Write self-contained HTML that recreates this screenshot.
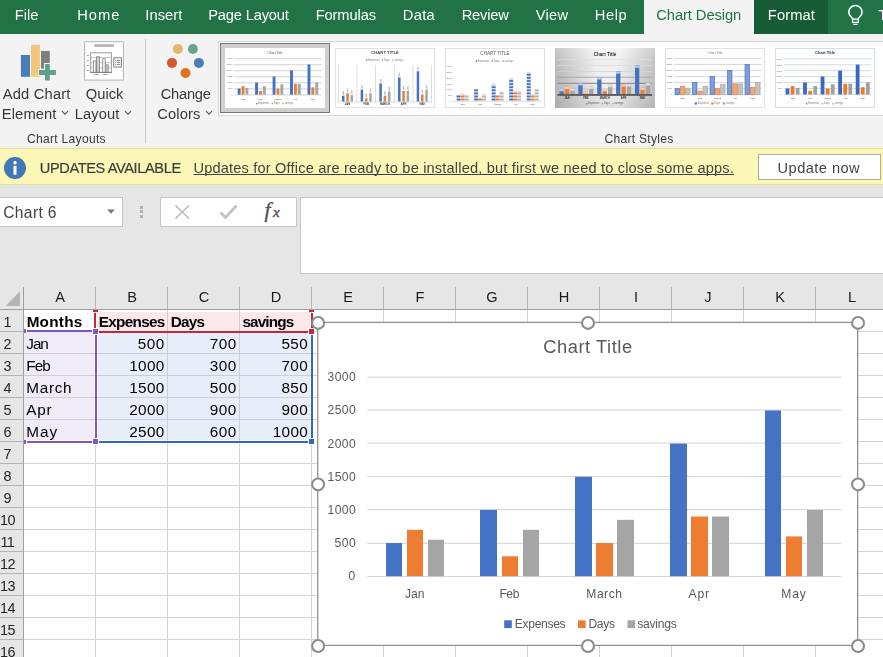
<!DOCTYPE html>
<html lang="en"><head><meta charset="utf-8"><title>Excel - Chart Design</title>
<style>
html,body{margin:0;padding:0;background:#fff;}
#app{position:relative;width:883px;height:657px;overflow:hidden;background:#fff;font-family:"Liberation Sans",sans-serif;}
#app div,#app svg{position:absolute;box-sizing:border-box;}
.t{position:absolute;white-space:pre;line-height:1;}
#topbar{left:0;top:0;width:883px;height:34px;background:#217346;}
#tab-cd{left:644px;top:0;width:110px;height:35px;background:#f3f3f3;}
#tab-fmt{left:754px;top:0;width:74px;height:34px;background:#185c37;}
#ribbon{left:0;top:34px;width:883px;height:115px;background:#f3f3f3;}
#sep1{left:145px;top:39px;width:1px;height:104px;background:#c6c6c6;}
#gallery{left:218px;top:41px;width:671px;height:75px;background:#fff;border:1px solid #d4d4d4;}
#selthumb{left:220px;top:43px;width:110px;height:70px;background:#d0cfcc;border:1px solid #767672;}
#th1{border:none;}
#th6{border-color:#d3dcee;}
.th{top:48px;width:100px;height:60px;background:#fff;border:1px solid #e1e1e1;}
#ybar{left:0;top:148px;width:883px;height:37px;background:#fcf7b6;border-top:1px solid #e5df94;border-bottom:1px solid #e5df94;}
#updbtn{left:758px;top:154px;width:123px;height:26px;background:#fff;border:1px solid #ababab;}
#fbar{left:0;top:185px;width:883px;height:102px;background:#e6e6e6;}
#namebox{left:-2px;top:197px;width:125px;height:30px;background:#fff;border:1px solid #c6c6c6;}
#fxbox{left:160px;top:197px;width:137px;height:30px;background:#fff;border:1px solid #c6c6c6;}
#finput{left:300px;top:197px;width:600px;height:77px;background:#fff;border:1px solid #c6c6c6;}
#colhdr{left:0;top:287px;width:883px;height:23px;background:#e6e6e6;border-bottom:1px solid #9f9f9f;}
#rowhdr{left:0;top:310px;width:24px;height:347px;background:#e6e6e6;border-right:1px solid #9f9f9f;}
.cs{top:287px;width:1px;height:22px;background:#b4b4b4;}
.vl{top:310px;width:1px;height:347px;background:#d4d4d4;}
.hl{left:24px;width:859px;height:1px;background:#d4d4d4;}
.rl{left:0;width:23px;height:1px;background:#b4b4b4;}
#chart{left:318px;top:322px;width:540px;height:324px;background:#fff;}
.gl{left:367.5px;width:474px;height:1px;background:#d9d9d9;}
.hd{width:13.400px;height:13.400px;border-radius:50%;background:#fff;border:2.400px solid #8f8f8f;}

</style></head>
<body>
<div id="app">
<div id="topbar"></div><div id="tab-fmt"></div>
<div id="ribbon"></div><div id="tab-cd"></div>
<div id="sep1"></div>
<div id="gallery"></div><div id="selthumb"></div>
<div class="th" id="th1" style="left:225px"></div>
<div class="th" id="th2" style="left:335px"></div>
<div class="th" id="th3" style="left:445px"></div>
<div class="th" id="th4" style="left:555px"></div>
<div class="th" id="th5" style="left:665px"></div>
<div class="th" id="th6" style="left:775px"></div>
<svg style="left:225px;top:48px;will-change:transform" width="100" height="60" viewBox="225 48 100 60" font-family="Liberation Sans, sans-serif"><rect x="234.3" y="94.25" width="87.30" height="1.2" fill="#dadada"/><rect x="234.3" y="88.22" width="87.30" height="1.2" fill="#dadada"/><rect x="234.3" y="82.19" width="87.30" height="1.2" fill="#dadada"/><rect x="234.3" y="76.16" width="87.30" height="1.2" fill="#dadada"/><rect x="234.3" y="70.13" width="87.30" height="1.2" fill="#dadada"/><rect x="234.3" y="64.10" width="87.30" height="1.2" fill="#dadada"/><rect x="234.3" y="58.07" width="87.30" height="1.2" fill="#dadada"/><g transform="translate(232.60 95.50) scale(0.25)"><text x="0" y="0" font-size="10.0" fill="#6e6e6e" font-weight="400" text-anchor="end" >0</text></g><g transform="translate(232.60 89.47) scale(0.25)"><text x="0" y="0" font-size="10.0" fill="#6e6e6e" font-weight="400" text-anchor="end" >500</text></g><g transform="translate(232.60 83.44) scale(0.25)"><text x="0" y="0" font-size="10.0" fill="#6e6e6e" font-weight="400" text-anchor="end" >1000</text></g><g transform="translate(232.60 77.41) scale(0.25)"><text x="0" y="0" font-size="10.0" fill="#6e6e6e" font-weight="400" text-anchor="end" >1500</text></g><g transform="translate(232.60 71.38) scale(0.25)"><text x="0" y="0" font-size="10.0" fill="#6e6e6e" font-weight="400" text-anchor="end" >2000</text></g><g transform="translate(232.60 65.35) scale(0.25)"><text x="0" y="0" font-size="10.0" fill="#6e6e6e" font-weight="400" text-anchor="end" >2500</text></g><g transform="translate(232.60 59.32) scale(0.25)"><text x="0" y="0" font-size="10.0" fill="#6e6e6e" font-weight="400" text-anchor="end" >3000</text></g><rect x="237.68" y="88.57" width="2.9" height="6.03" fill="#4472c4"/><rect x="241.58" y="86.16" width="2.9" height="8.44" fill="#ed7d31"/><rect x="245.48" y="87.97" width="2.9" height="6.63" fill="#a5a5a5"/><g transform="translate(243.03 99.60) scale(0.25)"><text x="0" y="0" font-size="10.0" fill="#3a3a3a" font-weight="400" text-anchor="middle" >Jan</text></g><rect x="255.14" y="82.54" width="2.9" height="12.06" fill="#4472c4"/><rect x="259.04" y="90.98" width="2.9" height="3.62" fill="#ed7d31"/><rect x="262.94" y="86.16" width="2.9" height="8.44" fill="#a5a5a5"/><g transform="translate(260.49 99.60) scale(0.25)"><text x="0" y="0" font-size="10.0" fill="#3a3a3a" font-weight="400" text-anchor="middle" >Feb</text></g><rect x="272.60" y="76.51" width="2.9" height="18.09" fill="#4472c4"/><rect x="276.50" y="88.57" width="2.9" height="6.03" fill="#ed7d31"/><rect x="280.40" y="84.35" width="2.9" height="10.25" fill="#a5a5a5"/><g transform="translate(277.95 99.60) scale(0.25)"><text x="0" y="0" font-size="10.0" fill="#3a3a3a" font-weight="400" text-anchor="middle" >March</text></g><rect x="290.06" y="70.48" width="2.9" height="24.12" fill="#4472c4"/><rect x="293.96" y="83.75" width="2.9" height="10.85" fill="#ed7d31"/><rect x="297.86" y="83.75" width="2.9" height="10.85" fill="#a5a5a5"/><g transform="translate(295.41 99.60) scale(0.25)"><text x="0" y="0" font-size="10.0" fill="#3a3a3a" font-weight="400" text-anchor="middle" >Apr</text></g><rect x="307.52" y="64.45" width="2.9" height="30.15" fill="#4472c4"/><rect x="311.42" y="87.36" width="2.9" height="7.24" fill="#ed7d31"/><rect x="315.32" y="82.54" width="2.9" height="12.06" fill="#a5a5a5"/><g transform="translate(312.87 99.60) scale(0.25)"><text x="0" y="0" font-size="10.0" fill="#3a3a3a" font-weight="400" text-anchor="middle" >May</text></g><g transform="translate(275.00 53.80) scale(0.25)"><text x="0" y="0" font-size="13.2" fill="#555" font-weight="400" text-anchor="middle" >Chart Title</text></g><rect x="256.10" y="103.00" width="1.3" height="1.3" fill="#4472c4"/><g transform="translate(258.20 104.10) scale(0.25)"><text x="0" y="0" font-size="10.4" fill="#7f7f7f" font-weight="400" text-anchor="start" >Expenses</text></g><rect x="271.70" y="103.00" width="1.3" height="1.3" fill="#ed7d31"/><g transform="translate(273.80 104.10) scale(0.25)"><text x="0" y="0" font-size="10.4" fill="#7f7f7f" font-weight="400" text-anchor="start" >Days</text></g><rect x="282.30" y="103.00" width="1.3" height="1.3" fill="#a5a5a5"/><g transform="translate(284.40 104.10) scale(0.25)"><text x="0" y="0" font-size="10.4" fill="#7f7f7f" font-weight="400" text-anchor="start" >savings</text></g></svg>
<svg style="left:335px;top:48px;will-change:transform" width="100" height="60" viewBox="335 48 100 60" font-family="Liberation Sans, sans-serif"><rect x="337.90" y="65" width="0.7" height="37.3" fill="#d0d0d0"/><rect x="356.58" y="65" width="0.7" height="37.3" fill="#d0d0d0"/><rect x="375.26" y="65" width="0.7" height="37.3" fill="#d0d0d0"/><rect x="393.94" y="65" width="0.7" height="37.3" fill="#d0d0d0"/><rect x="412.62" y="65" width="0.7" height="37.3" fill="#d0d0d0"/><rect x="431.30" y="65" width="0.7" height="37.3" fill="#d0d0d0"/><rect x="341.99" y="95.70" width="2.5" height="6.10" fill="#4472c4"/><rect x="342.49" y="91.10" width="1.5" height="3.6" fill="#c2c2c2"/><rect x="346.29" y="93.26" width="2.5" height="8.54" fill="#ed7d31"/><rect x="346.79" y="88.66" width="1.5" height="3.6" fill="#c2c2c2"/><rect x="350.59" y="95.09" width="2.5" height="6.71" fill="#a5a5a5"/><rect x="351.09" y="90.49" width="1.5" height="3.6" fill="#c2c2c2"/><g transform="translate(347.54 105.20) scale(0.25)"><text x="0" y="0" font-size="10.8" fill="#333" font-weight="700" text-anchor="middle" >JAN</text></g><rect x="360.67" y="89.60" width="2.5" height="12.20" fill="#4472c4"/><rect x="361.17" y="85.00" width="1.5" height="3.6" fill="#c2c2c2"/><rect x="364.97" y="98.14" width="2.5" height="3.66" fill="#ed7d31"/><rect x="365.47" y="93.54" width="1.5" height="3.6" fill="#c2c2c2"/><rect x="369.27" y="93.26" width="2.5" height="8.54" fill="#a5a5a5"/><rect x="369.77" y="88.66" width="1.5" height="3.6" fill="#c2c2c2"/><g transform="translate(366.22 105.20) scale(0.25)"><text x="0" y="0" font-size="10.8" fill="#333" font-weight="700" text-anchor="middle" >FEB</text></g><rect x="379.35" y="83.50" width="2.5" height="18.30" fill="#4472c4"/><rect x="379.85" y="78.90" width="1.5" height="3.6" fill="#c2c2c2"/><rect x="383.65" y="95.70" width="2.5" height="6.10" fill="#ed7d31"/><rect x="384.15" y="91.10" width="1.5" height="3.6" fill="#c2c2c2"/><rect x="387.95" y="91.43" width="2.5" height="10.37" fill="#a5a5a5"/><rect x="388.45" y="86.83" width="1.5" height="3.6" fill="#c2c2c2"/><g transform="translate(384.90 105.20) scale(0.25)"><text x="0" y="0" font-size="10.8" fill="#333" font-weight="700" text-anchor="middle" >MARCH</text></g><rect x="398.03" y="77.40" width="2.5" height="24.40" fill="#4472c4"/><rect x="398.53" y="72.80" width="1.5" height="3.6" fill="#c2c2c2"/><rect x="402.33" y="90.82" width="2.5" height="10.98" fill="#ed7d31"/><rect x="402.83" y="86.22" width="1.5" height="3.6" fill="#c2c2c2"/><rect x="406.63" y="90.82" width="2.5" height="10.98" fill="#a5a5a5"/><rect x="407.13" y="86.22" width="1.5" height="3.6" fill="#c2c2c2"/><g transform="translate(403.58 105.20) scale(0.25)"><text x="0" y="0" font-size="10.8" fill="#333" font-weight="700" text-anchor="middle" >APR</text></g><rect x="416.71" y="71.30" width="2.5" height="30.50" fill="#4472c4"/><rect x="417.21" y="66.70" width="1.5" height="3.6" fill="#c2c2c2"/><rect x="421.01" y="94.48" width="2.5" height="7.32" fill="#ed7d31"/><rect x="421.51" y="89.88" width="1.5" height="3.6" fill="#c2c2c2"/><rect x="425.31" y="89.60" width="2.5" height="12.20" fill="#a5a5a5"/><rect x="425.81" y="85.00" width="1.5" height="3.6" fill="#c2c2c2"/><g transform="translate(422.26 105.20) scale(0.25)"><text x="0" y="0" font-size="10.8" fill="#333" font-weight="700" text-anchor="middle" >MAY</text></g><rect x="338.2" y="101.50" width="93.40" height="0.8" fill="#d4d4d4"/><g transform="translate(385.00 53.70) scale(0.25)"><text x="0" y="0" font-size="16.8" fill="#4a4a4a" font-weight="700" text-anchor="middle" >CHART TITLE</text></g><rect x="366.10" y="59.50" width="1.3" height="1.3" fill="#4472c4"/><g transform="translate(368.20 60.60) scale(0.25)"><text x="0" y="0" font-size="10.4" fill="#7f7f7f" font-weight="400" text-anchor="start" >Expenses</text></g><rect x="381.70" y="59.50" width="1.3" height="1.3" fill="#ed7d31"/><g transform="translate(383.80 60.60) scale(0.25)"><text x="0" y="0" font-size="10.4" fill="#7f7f7f" font-weight="400" text-anchor="start" >Days</text></g><rect x="392.30" y="59.50" width="1.3" height="1.3" fill="#a5a5a5"/><g transform="translate(394.40 60.60) scale(0.25)"><text x="0" y="0" font-size="10.4" fill="#7f7f7f" font-weight="400" text-anchor="start" >savings</text></g></svg>
<svg style="left:445px;top:48px;will-change:transform" width="100" height="60" viewBox="445 48 100 60" font-family="Liberation Sans, sans-serif"><g transform="translate(452.10 101.90) scale(0.25)"><text x="0" y="0" font-size="10.0" fill="#6e6e6e" font-weight="400" text-anchor="end" >0</text></g><g transform="translate(452.10 96.10) scale(0.25)"><text x="0" y="0" font-size="10.0" fill="#6e6e6e" font-weight="400" text-anchor="end" >500</text></g><g transform="translate(452.10 90.30) scale(0.25)"><text x="0" y="0" font-size="10.0" fill="#6e6e6e" font-weight="400" text-anchor="end" >1000</text></g><g transform="translate(452.10 84.50) scale(0.25)"><text x="0" y="0" font-size="10.0" fill="#6e6e6e" font-weight="400" text-anchor="end" >1500</text></g><g transform="translate(452.10 78.70) scale(0.25)"><text x="0" y="0" font-size="10.0" fill="#6e6e6e" font-weight="400" text-anchor="end" >2000</text></g><g transform="translate(452.10 72.90) scale(0.25)"><text x="0" y="0" font-size="10.0" fill="#6e6e6e" font-weight="400" text-anchor="end" >2500</text></g><g transform="translate(452.10 67.10) scale(0.25)"><text x="0" y="0" font-size="10.0" fill="#6e6e6e" font-weight="400" text-anchor="end" >3000</text></g><rect x="456.62" y="95.20" width="3.9" height="5.80" fill="#a9bfe8" opacity="0.55"/><rect x="456.62" y="98.70" width="3.9" height="1.7" fill="#4472c4"/><rect x="456.62" y="95.60" width="3.9" height="1.7" fill="#4472c4"/><rect x="460.62" y="92.88" width="3.9" height="8.12" fill="#f6c3a0" opacity="0.55"/><rect x="460.62" y="98.70" width="3.9" height="1.7" fill="#ed7d31"/><rect x="460.62" y="95.60" width="3.9" height="1.7" fill="#ed7d31"/><rect x="464.62" y="94.62" width="3.9" height="6.38" fill="#dcdcdc" opacity="0.55"/><rect x="464.62" y="98.70" width="3.9" height="1.7" fill="#b4b4b4"/><rect x="464.62" y="95.60" width="3.9" height="1.7" fill="#b4b4b4"/><g transform="translate(462.57 105.30) scale(0.25)"><text x="0" y="0" font-size="10.0" fill="#444" font-weight="400" text-anchor="middle" >Jan</text></g><rect x="474.16" y="89.40" width="3.9" height="11.60" fill="#a9bfe8" opacity="0.55"/><rect x="474.16" y="98.70" width="3.9" height="1.7" fill="#4472c4"/><rect x="474.16" y="95.60" width="3.9" height="1.7" fill="#4472c4"/><rect x="474.16" y="92.50" width="3.9" height="1.7" fill="#4472c4"/><rect x="474.16" y="89.40" width="3.9" height="1.7" fill="#4472c4"/><rect x="478.16" y="97.52" width="3.9" height="3.48" fill="#f6c3a0" opacity="0.55"/><rect x="478.16" y="98.70" width="3.9" height="1.7" fill="#ed7d31"/><rect x="482.16" y="92.88" width="3.9" height="8.12" fill="#dcdcdc" opacity="0.55"/><rect x="482.16" y="98.70" width="3.9" height="1.7" fill="#b4b4b4"/><rect x="482.16" y="95.60" width="3.9" height="1.7" fill="#b4b4b4"/><g transform="translate(480.11 105.30) scale(0.25)"><text x="0" y="0" font-size="10.0" fill="#444" font-weight="400" text-anchor="middle" >Feb</text></g><rect x="491.70" y="83.60" width="3.9" height="17.40" fill="#a9bfe8" opacity="0.55"/><rect x="491.70" y="98.70" width="3.9" height="1.7" fill="#4472c4"/><rect x="491.70" y="95.60" width="3.9" height="1.7" fill="#4472c4"/><rect x="491.70" y="92.50" width="3.9" height="1.7" fill="#4472c4"/><rect x="491.70" y="89.40" width="3.9" height="1.7" fill="#4472c4"/><rect x="491.70" y="86.30" width="3.9" height="1.7" fill="#4472c4"/><rect x="495.70" y="95.20" width="3.9" height="5.80" fill="#f6c3a0" opacity="0.55"/><rect x="495.70" y="98.70" width="3.9" height="1.7" fill="#ed7d31"/><rect x="495.70" y="95.60" width="3.9" height="1.7" fill="#ed7d31"/><rect x="499.70" y="91.14" width="3.9" height="9.86" fill="#dcdcdc" opacity="0.55"/><rect x="499.70" y="98.70" width="3.9" height="1.7" fill="#b4b4b4"/><rect x="499.70" y="95.60" width="3.9" height="1.7" fill="#b4b4b4"/><rect x="499.70" y="92.50" width="3.9" height="1.7" fill="#b4b4b4"/><g transform="translate(497.65 105.30) scale(0.25)"><text x="0" y="0" font-size="10.0" fill="#444" font-weight="400" text-anchor="middle" >March</text></g><rect x="509.24" y="77.80" width="3.9" height="23.20" fill="#a9bfe8" opacity="0.55"/><rect x="509.24" y="98.70" width="3.9" height="1.7" fill="#4472c4"/><rect x="509.24" y="95.60" width="3.9" height="1.7" fill="#4472c4"/><rect x="509.24" y="92.50" width="3.9" height="1.7" fill="#4472c4"/><rect x="509.24" y="89.40" width="3.9" height="1.7" fill="#4472c4"/><rect x="509.24" y="86.30" width="3.9" height="1.7" fill="#4472c4"/><rect x="509.24" y="83.20" width="3.9" height="1.7" fill="#4472c4"/><rect x="509.24" y="80.10" width="3.9" height="1.7" fill="#4472c4"/><rect x="513.24" y="90.56" width="3.9" height="10.44" fill="#f6c3a0" opacity="0.55"/><rect x="513.24" y="98.70" width="3.9" height="1.7" fill="#ed7d31"/><rect x="513.24" y="95.60" width="3.9" height="1.7" fill="#ed7d31"/><rect x="513.24" y="92.50" width="3.9" height="1.7" fill="#ed7d31"/><rect x="517.24" y="90.56" width="3.9" height="10.44" fill="#dcdcdc" opacity="0.55"/><rect x="517.24" y="98.70" width="3.9" height="1.7" fill="#b4b4b4"/><rect x="517.24" y="95.60" width="3.9" height="1.7" fill="#b4b4b4"/><rect x="517.24" y="92.50" width="3.9" height="1.7" fill="#b4b4b4"/><g transform="translate(515.19 105.30) scale(0.25)"><text x="0" y="0" font-size="10.0" fill="#444" font-weight="400" text-anchor="middle" >Apr</text></g><rect x="526.78" y="72.00" width="3.9" height="29.00" fill="#a9bfe8" opacity="0.55"/><rect x="526.78" y="98.70" width="3.9" height="1.7" fill="#4472c4"/><rect x="526.78" y="95.60" width="3.9" height="1.7" fill="#4472c4"/><rect x="526.78" y="92.50" width="3.9" height="1.7" fill="#4472c4"/><rect x="526.78" y="89.40" width="3.9" height="1.7" fill="#4472c4"/><rect x="526.78" y="86.30" width="3.9" height="1.7" fill="#4472c4"/><rect x="526.78" y="83.20" width="3.9" height="1.7" fill="#4472c4"/><rect x="526.78" y="80.10" width="3.9" height="1.7" fill="#4472c4"/><rect x="526.78" y="77.00" width="3.9" height="1.7" fill="#4472c4"/><rect x="526.78" y="73.90" width="3.9" height="1.7" fill="#4472c4"/><rect x="530.78" y="94.04" width="3.9" height="6.96" fill="#f6c3a0" opacity="0.55"/><rect x="530.78" y="98.70" width="3.9" height="1.7" fill="#ed7d31"/><rect x="530.78" y="95.60" width="3.9" height="1.7" fill="#ed7d31"/><rect x="534.78" y="89.40" width="3.9" height="11.60" fill="#dcdcdc" opacity="0.55"/><rect x="534.78" y="98.70" width="3.9" height="1.7" fill="#b4b4b4"/><rect x="534.78" y="95.60" width="3.9" height="1.7" fill="#b4b4b4"/><rect x="534.78" y="92.50" width="3.9" height="1.7" fill="#b4b4b4"/><rect x="534.78" y="89.40" width="3.9" height="1.7" fill="#b4b4b4"/><g transform="translate(532.73 105.30) scale(0.25)"><text x="0" y="0" font-size="10.0" fill="#444" font-weight="400" text-anchor="middle" >May</text></g><rect x="453.8" y="100.70" width="87.70" height="0.8" fill="#d0d0d0"/><g transform="translate(495.00 55.30) scale(0.25)"><text x="0" y="0" font-size="18.4" fill="#5a5a5a" font-weight="400" text-anchor="middle" >CHART TITLE</text></g><rect x="475.80" y="60.30" width="1.5" height="1.5" fill="#4472c4"/><g transform="translate(478.10 61.60) scale(0.25)"><text x="0" y="0" font-size="10.4" fill="#7f7f7f" font-weight="400" text-anchor="start" >Expenses</text></g><rect x="491.60" y="60.30" width="1.5" height="1.5" fill="#ed7d31"/><g transform="translate(493.90 61.60) scale(0.25)"><text x="0" y="0" font-size="10.4" fill="#7f7f7f" font-weight="400" text-anchor="start" >Days</text></g><rect x="502.40" y="60.30" width="1.5" height="1.5" fill="#a5a5a5"/><g transform="translate(504.70 61.60) scale(0.25)"><text x="0" y="0" font-size="10.4" fill="#7f7f7f" font-weight="400" text-anchor="start" >savings</text></g></svg>
<svg style="left:555px;top:48px;will-change:transform" width="100" height="60" viewBox="555 48 100 60" font-family="Liberation Sans, sans-serif"><defs><linearGradient id="g4" x1="0" x2="1" y1="0" y2="0"><stop offset="0" stop-color="#b6b6b6"/><stop offset="0.42" stop-color="#f4f4f4"/><stop offset="0.62" stop-color="#f6f6f6"/><stop offset="1" stop-color="#c0c0c0"/></linearGradient><linearGradient id="g4v" x1="0" x2="0" y1="0" y2="1"><stop offset="0" stop-color="#fff" stop-opacity="0.25"/><stop offset="0.55" stop-color="#aaa" stop-opacity="0.05"/><stop offset="1" stop-color="#888" stop-opacity="0.22"/></linearGradient></defs><rect x="555" y="48" width="100" height="60" fill="url(#g4)"/><rect x="555" y="48" width="100" height="60" fill="url(#g4v)"/><rect x="557.5" y="59.30" width="94.5" height="0.8" fill="#dedede"/><rect x="557.5" y="65.20" width="94.5" height="0.8" fill="#dadada"/><rect x="557.5" y="71.00" width="94.5" height="0.8" fill="#d2d2d2"/><rect x="557.5" y="76.75" width="94.5" height="0.9" fill="#a4a4a4"/><rect x="557.5" y="82.75" width="94.5" height="1.1" fill="#8c8c8c"/><rect x="557.5" y="88.60" width="94.5" height="0.8" fill="#c6c6c6"/><rect x="559.40" y="88.92" width="4.3" height="5.88" fill="#4472c4"/><rect x="559.20" y="89.02" width="4.7" height="2.3" fill="#b9caec"/><rect x="564.80" y="86.57" width="4.3" height="8.23" fill="#ed7d31"/><rect x="564.60" y="86.67" width="4.7" height="2.3" fill="#f7cdb0"/><rect x="570.20" y="88.33" width="4.3" height="6.47" fill="#a5a5a5"/><rect x="570.00" y="88.43" width="4.7" height="2.3" fill="#dedede"/><g transform="translate(566.95 99.40) scale(0.25)"><text x="0" y="0" font-size="10.8" fill="#303030" font-weight="700" text-anchor="middle" >JAN</text></g><rect x="578.30" y="83.04" width="4.3" height="11.76" fill="#4472c4"/><rect x="578.10" y="83.14" width="4.7" height="2.3" fill="#b9caec"/><rect x="583.70" y="91.27" width="4.3" height="3.53" fill="#ed7d31"/><rect x="583.50" y="91.37" width="4.7" height="2.3" fill="#f7cdb0"/><rect x="589.10" y="86.57" width="4.3" height="8.23" fill="#a5a5a5"/><rect x="588.90" y="86.67" width="4.7" height="2.3" fill="#dedede"/><g transform="translate(585.85 99.40) scale(0.25)"><text x="0" y="0" font-size="10.8" fill="#303030" font-weight="700" text-anchor="middle" >FEB</text></g><rect x="597.20" y="77.16" width="4.3" height="17.64" fill="#4472c4"/><rect x="597.00" y="77.26" width="4.7" height="2.3" fill="#b9caec"/><rect x="602.60" y="88.92" width="4.3" height="5.88" fill="#ed7d31"/><rect x="602.40" y="89.02" width="4.7" height="2.3" fill="#f7cdb0"/><rect x="608.00" y="84.80" width="4.3" height="10.00" fill="#a5a5a5"/><rect x="607.80" y="84.90" width="4.7" height="2.3" fill="#dedede"/><g transform="translate(604.75 99.40) scale(0.25)"><text x="0" y="0" font-size="10.8" fill="#303030" font-weight="700" text-anchor="middle" >MARCH</text></g><rect x="616.10" y="71.28" width="4.3" height="23.52" fill="#4472c4"/><rect x="615.90" y="71.38" width="4.7" height="2.3" fill="#b9caec"/><rect x="621.50" y="84.22" width="4.3" height="10.58" fill="#ed7d31"/><rect x="621.30" y="84.32" width="4.7" height="2.3" fill="#f7cdb0"/><rect x="626.90" y="84.22" width="4.3" height="10.58" fill="#a5a5a5"/><rect x="626.70" y="84.32" width="4.7" height="2.3" fill="#dedede"/><g transform="translate(623.65 99.40) scale(0.25)"><text x="0" y="0" font-size="10.8" fill="#303030" font-weight="700" text-anchor="middle" >APR</text></g><rect x="635.00" y="65.40" width="4.3" height="29.40" fill="#4472c4"/><rect x="634.80" y="65.50" width="4.7" height="2.3" fill="#b9caec"/><rect x="640.40" y="87.74" width="4.3" height="7.06" fill="#ed7d31"/><rect x="640.20" y="87.84" width="4.7" height="2.3" fill="#f7cdb0"/><rect x="645.80" y="83.04" width="4.3" height="11.76" fill="#a5a5a5"/><rect x="645.60" y="83.14" width="4.7" height="2.3" fill="#dedede"/><g transform="translate(642.55 99.40) scale(0.25)"><text x="0" y="0" font-size="10.8" fill="#303030" font-weight="700" text-anchor="middle" >MAY</text></g><rect x="557.5" y="94" width="94.5" height="1.9" fill="#5c5c5c"/><g transform="translate(605.00 55.60) scale(0.25)"><text x="0" y="0" font-size="18.4" fill="#303030" font-weight="700" text-anchor="middle" >Chart Title</text></g><rect x="586.10" y="103.10" width="1.3" height="1.3" fill="#4472c4"/><g transform="translate(588.20 104.20) scale(0.25)"><text x="0" y="0" font-size="10.4" fill="#595959" font-weight="400" text-anchor="start" >Expenses</text></g><rect x="601.70" y="103.10" width="1.3" height="1.3" fill="#ed7d31"/><g transform="translate(603.80 104.20) scale(0.25)"><text x="0" y="0" font-size="10.4" fill="#595959" font-weight="400" text-anchor="start" >Days</text></g><rect x="612.30" y="103.10" width="1.3" height="1.3" fill="#a5a5a5"/><g transform="translate(614.40 104.20) scale(0.25)"><text x="0" y="0" font-size="10.4" fill="#595959" font-weight="400" text-anchor="start" >savings</text></g></svg>
<svg style="left:665px;top:48px;will-change:transform" width="100" height="60" viewBox="665 48 100 60" font-family="Liberation Sans, sans-serif"><rect x="673.8" y="94.05" width="87.50" height="1.2" fill="#dcdcdc"/><rect x="673.8" y="88.02" width="87.50" height="1.2" fill="#dcdcdc"/><rect x="673.8" y="81.99" width="87.50" height="1.2" fill="#dcdcdc"/><rect x="673.8" y="75.96" width="87.50" height="1.2" fill="#dcdcdc"/><rect x="673.8" y="69.93" width="87.50" height="1.2" fill="#dcdcdc"/><rect x="673.8" y="63.90" width="87.50" height="1.2" fill="#dcdcdc"/><rect x="673.8" y="57.87" width="87.50" height="1.2" fill="#dcdcdc"/><g transform="translate(672.10 95.30) scale(0.25)"><text x="0" y="0" font-size="10.0" fill="#6e6e6e" font-weight="400" text-anchor="end" >0</text></g><g transform="translate(672.10 89.27) scale(0.25)"><text x="0" y="0" font-size="10.0" fill="#6e6e6e" font-weight="400" text-anchor="end" >500</text></g><g transform="translate(672.10 83.24) scale(0.25)"><text x="0" y="0" font-size="10.0" fill="#6e6e6e" font-weight="400" text-anchor="end" >1000</text></g><g transform="translate(672.10 77.21) scale(0.25)"><text x="0" y="0" font-size="10.0" fill="#6e6e6e" font-weight="400" text-anchor="end" >1500</text></g><g transform="translate(672.10 71.18) scale(0.25)"><text x="0" y="0" font-size="10.0" fill="#6e6e6e" font-weight="400" text-anchor="end" >2000</text></g><g transform="translate(672.10 65.15) scale(0.25)"><text x="0" y="0" font-size="10.0" fill="#6e6e6e" font-weight="400" text-anchor="end" >2500</text></g><g transform="translate(672.10 59.12) scale(0.25)"><text x="0" y="0" font-size="10.0" fill="#6e6e6e" font-weight="400" text-anchor="end" >3000</text></g><rect x="675.05" y="88.67" width="4.40" height="5.73" fill="#7f9ddb" stroke="#4472c4" stroke-width="0.7"/><rect x="680.35" y="86.26" width="4.40" height="8.14" fill="#f2a676" stroke="#ed7d31" stroke-width="0.7"/><rect x="685.65" y="88.07" width="4.40" height="6.33" fill="#c2c2c2" stroke="#a5a5a5" stroke-width="0.7"/><g transform="translate(682.55 99.20) scale(0.25)"><text x="0" y="0" font-size="10.0" fill="#3a3a3a" font-weight="400" text-anchor="middle" >Jan</text></g><rect x="692.55" y="82.64" width="4.40" height="11.76" fill="#7f9ddb" stroke="#4472c4" stroke-width="0.7"/><rect x="697.85" y="91.08" width="4.40" height="3.32" fill="#f2a676" stroke="#ed7d31" stroke-width="0.7"/><rect x="703.15" y="86.26" width="4.40" height="8.14" fill="#c2c2c2" stroke="#a5a5a5" stroke-width="0.7"/><g transform="translate(700.05 99.20) scale(0.25)"><text x="0" y="0" font-size="10.0" fill="#3a3a3a" font-weight="400" text-anchor="middle" >Feb</text></g><rect x="710.05" y="76.61" width="4.40" height="17.79" fill="#7f9ddb" stroke="#4472c4" stroke-width="0.7"/><rect x="715.35" y="88.67" width="4.40" height="5.73" fill="#f2a676" stroke="#ed7d31" stroke-width="0.7"/><rect x="720.65" y="84.45" width="4.40" height="9.95" fill="#c2c2c2" stroke="#a5a5a5" stroke-width="0.7"/><g transform="translate(717.55 99.20) scale(0.25)"><text x="0" y="0" font-size="10.0" fill="#3a3a3a" font-weight="400" text-anchor="middle" >March</text></g><rect x="727.55" y="70.58" width="4.40" height="23.82" fill="#7f9ddb" stroke="#4472c4" stroke-width="0.7"/><rect x="732.85" y="83.85" width="4.40" height="10.55" fill="#f2a676" stroke="#ed7d31" stroke-width="0.7"/><rect x="738.15" y="83.85" width="4.40" height="10.55" fill="#c2c2c2" stroke="#a5a5a5" stroke-width="0.7"/><g transform="translate(735.05 99.20) scale(0.25)"><text x="0" y="0" font-size="10.0" fill="#3a3a3a" font-weight="400" text-anchor="middle" >Apr</text></g><rect x="745.05" y="64.55" width="4.40" height="29.85" fill="#7f9ddb" stroke="#4472c4" stroke-width="0.7"/><rect x="750.35" y="87.46" width="4.40" height="6.94" fill="#f2a676" stroke="#ed7d31" stroke-width="0.7"/><rect x="755.65" y="82.64" width="4.40" height="11.76" fill="#c2c2c2" stroke="#a5a5a5" stroke-width="0.7"/><g transform="translate(752.55 99.20) scale(0.25)"><text x="0" y="0" font-size="10.0" fill="#3a3a3a" font-weight="400" text-anchor="middle" >May</text></g><g transform="translate(715.00 53.90) scale(0.25)"><text x="0" y="0" font-size="13.2" fill="#777" font-weight="400" text-anchor="middle" >Chart Title</text></g><rect x="694.75" y="102.40" width="2.2" height="2.2" fill="#4472c4"/><g transform="translate(697.75 104.40) scale(0.25)"><text x="0" y="0" font-size="10.4" fill="#7f7f7f" font-weight="400" text-anchor="start" >Expenses</text></g><rect x="711.25" y="102.40" width="2.2" height="2.2" fill="#ed7d31"/><g transform="translate(714.25 104.40) scale(0.25)"><text x="0" y="0" font-size="10.4" fill="#7f7f7f" font-weight="400" text-anchor="start" >Days</text></g><rect x="722.75" y="102.40" width="2.2" height="2.2" fill="#a5a5a5"/><g transform="translate(725.75 104.40) scale(0.25)"><text x="0" y="0" font-size="10.4" fill="#7f7f7f" font-weight="400" text-anchor="start" >savings</text></g></svg>
<svg style="left:775px;top:48px;will-change:transform" width="100" height="60" viewBox="775 48 100 60" font-family="Liberation Sans, sans-serif"><rect x="783.8" y="94.05" width="87.70" height="0.9" fill="#cdd8ec"/><rect x="783.8" y="88.10" width="87.70" height="0.9" fill="#cdd8ec"/><rect x="783.8" y="82.15" width="87.70" height="0.9" fill="#cdd8ec"/><rect x="783.8" y="76.20" width="87.70" height="0.9" fill="#cdd8ec"/><rect x="783.8" y="70.25" width="87.70" height="0.9" fill="#cdd8ec"/><rect x="783.8" y="64.30" width="87.70" height="0.9" fill="#cdd8ec"/><rect x="783.8" y="58.35" width="87.70" height="0.9" fill="#cdd8ec"/><g transform="translate(782.10 95.30) scale(0.25)"><text x="0" y="0" font-size="10.0" fill="#6e6e6e" font-weight="400" text-anchor="end" >0</text></g><g transform="translate(782.10 89.35) scale(0.25)"><text x="0" y="0" font-size="10.0" fill="#6e6e6e" font-weight="400" text-anchor="end" >500</text></g><g transform="translate(782.10 83.40) scale(0.25)"><text x="0" y="0" font-size="10.0" fill="#6e6e6e" font-weight="400" text-anchor="end" >1000</text></g><g transform="translate(782.10 77.45) scale(0.25)"><text x="0" y="0" font-size="10.0" fill="#6e6e6e" font-weight="400" text-anchor="end" >1500</text></g><g transform="translate(782.10 71.50) scale(0.25)"><text x="0" y="0" font-size="10.0" fill="#6e6e6e" font-weight="400" text-anchor="end" >2000</text></g><g transform="translate(782.10 65.55) scale(0.25)"><text x="0" y="0" font-size="10.0" fill="#6e6e6e" font-weight="400" text-anchor="end" >2500</text></g><g transform="translate(782.10 59.60) scale(0.25)"><text x="0" y="0" font-size="10.0" fill="#6e6e6e" font-weight="400" text-anchor="end" >3000</text></g><rect x="785.57" y="88.45" width="3.8" height="5.95" fill="#3a66c4"/><rect x="790.67" y="86.07" width="3.8" height="8.33" fill="#f07a22"/><rect x="795.77" y="87.86" width="3.8" height="6.55" fill="#a0a0a0"/><g transform="translate(792.57 99.20) scale(0.25)"><text x="0" y="0" font-size="10.0" fill="#3a3a3a" font-weight="400" text-anchor="middle" >Jan</text></g><rect x="803.11" y="82.50" width="3.8" height="11.90" fill="#3a66c4"/><rect x="808.21" y="90.83" width="3.8" height="3.57" fill="#f07a22"/><rect x="813.31" y="86.07" width="3.8" height="8.33" fill="#a0a0a0"/><g transform="translate(810.11 99.20) scale(0.25)"><text x="0" y="0" font-size="10.0" fill="#3a3a3a" font-weight="400" text-anchor="middle" >Feb</text></g><rect x="820.65" y="76.55" width="3.8" height="17.85" fill="#3a66c4"/><rect x="825.75" y="88.45" width="3.8" height="5.95" fill="#f07a22"/><rect x="830.85" y="84.29" width="3.8" height="10.12" fill="#a0a0a0"/><g transform="translate(827.65 99.20) scale(0.25)"><text x="0" y="0" font-size="10.0" fill="#3a3a3a" font-weight="400" text-anchor="middle" >March</text></g><rect x="838.19" y="70.60" width="3.8" height="23.80" fill="#3a66c4"/><rect x="843.29" y="83.69" width="3.8" height="10.71" fill="#f07a22"/><rect x="848.39" y="83.69" width="3.8" height="10.71" fill="#a0a0a0"/><g transform="translate(845.19 99.20) scale(0.25)"><text x="0" y="0" font-size="10.0" fill="#3a3a3a" font-weight="400" text-anchor="middle" >Apr</text></g><rect x="855.73" y="64.65" width="3.8" height="29.75" fill="#3a66c4"/><rect x="860.83" y="87.26" width="3.8" height="7.14" fill="#f07a22"/><rect x="865.93" y="82.50" width="3.8" height="11.90" fill="#a0a0a0"/><g transform="translate(862.73 99.20) scale(0.25)"><text x="0" y="0" font-size="10.0" fill="#3a3a3a" font-weight="400" text-anchor="middle" >May</text></g><g transform="translate(825.00 54.00) scale(0.25)"><text x="0" y="0" font-size="16.4" fill="#1f3864" font-weight="700" text-anchor="middle" >Chart Title</text></g><rect x="806.10" y="103.10" width="1.3" height="1.3" fill="#3a66c4"/><g transform="translate(808.20 104.20) scale(0.25)"><text x="0" y="0" font-size="10.4" fill="#7f7f7f" font-weight="400" text-anchor="start" >Expenses</text></g><rect x="821.70" y="103.10" width="1.3" height="1.3" fill="#f07a22"/><g transform="translate(823.80 104.20) scale(0.25)"><text x="0" y="0" font-size="10.4" fill="#7f7f7f" font-weight="400" text-anchor="start" >Days</text></g><rect x="832.30" y="103.10" width="1.3" height="1.3" fill="#a0a0a0"/><g transform="translate(834.40 104.20) scale(0.25)"><text x="0" y="0" font-size="10.4" fill="#7f7f7f" font-weight="400" text-anchor="start" >savings</text></g></svg>
<div id="ybar"></div><div id="updbtn"></div>
<svg style="left:18px;top:42px" width="42" height="42" viewBox="18 42 42 42"><rect x="20.900" y="55" width="9.100" height="21.800" fill="#4a7ebb"/><rect x="31" y="44.800" width="8.900" height="32" fill="#f0c878"/><rect x="41" y="51" width="8.800" height="17.600" fill="#7f7f7f"/><path d="M44 63h6.800v6h6v7h-6v5.600h-6.800v-5.600h-6v-7h6z" fill="#f3f3f3"/><path d="M45 64.100h4.800v5.900h6.100v5h-6.100v5.600h-4.800v-5.600h-6.100v-5h6.100z" fill="#5fa08c"/></svg>
<svg style="left:83px;top:40px" width="43" height="43" viewBox="83 40 43 43"><rect x="84.600" y="41.700" width="38.800" height="38.400" fill="#fff" stroke="#b2b2b2" stroke-width="1"/><rect x="94.300" y="44.200" width="19.700" height="2.700" fill="#b4b4b4"/><rect x="90.700" y="52.800" width="20.700" height="19.600" fill="#fff" stroke="#9a9a9a" stroke-width="1"/><rect x="91" y="57.1" width="20.400" height="0.800" fill="#b9b9b9"/><rect x="91" y="62.4" width="20.400" height="0.800" fill="#b9b9b9"/><rect x="91" y="67.5" width="20.400" height="0.800" fill="#b9b9b9"/><rect x="93.55" y="60.85" width="2.40" height="11.45" fill="#fff" stroke="#7a7a7a" stroke-width="0.800"/><rect x="96.64999999999999" y="56.75" width="2.70" height="15.55" fill="#d2d2d2" stroke="#7a7a7a" stroke-width="0.800"/><rect x="102.75" y="58.75" width="2.40" height="13.55" fill="#fff" stroke="#7a7a7a" stroke-width="0.800"/><rect x="105.85" y="64.85" width="2.30" height="7.45" fill="#d2d2d2" stroke="#7a7a7a" stroke-width="0.800"/><rect x="90.200" y="71.900" width="21.700" height="1" fill="#808080"/><rect x="87" y="55.05" width="1.900" height="0.900" fill="#9a9a9a"/><rect x="87" y="60.05" width="1.900" height="0.900" fill="#9a9a9a"/><rect x="87" y="64.95" width="1.900" height="0.900" fill="#9a9a9a"/><rect x="87" y="70.05" width="1.900" height="0.900" fill="#9a9a9a"/><rect x="113.800" y="57.800" width="7.600" height="9.200" fill="#fff" stroke="#7f7f7f" stroke-width="1"/><rect x="115.300" y="59.949999999999996" width="1" height="0.900" fill="#666"/><rect x="117" y="59.949999999999996" width="3.200" height="0.900" fill="#777"/><rect x="115.300" y="61.949999999999996" width="1" height="0.900" fill="#666"/><rect x="117" y="61.949999999999996" width="3.200" height="0.900" fill="#777"/><rect x="115.300" y="63.95" width="1" height="0.900" fill="#666"/><rect x="117" y="63.95" width="3.200" height="0.900" fill="#777"/><rect x="94.300" y="74.100" width="4.700" height="0.900" fill="#a0a0a0"/><rect x="103" y="74.100" width="4.900" height="0.900" fill="#a0a0a0"/></svg>
<svg style="left:165px;top:42px" width="42" height="38" viewBox="165 42 42 38"><circle cx="177.900" cy="49" r="5" fill="#eab564"/><circle cx="192.900" cy="49" r="5" fill="#68a48c"/><circle cx="172" cy="62.900" r="5" fill="#d65532"/><circle cx="198.900" cy="62.900" r="5" fill="#4a7db3"/><circle cx="185.500" cy="73" r="5" fill="#e2711d"/></svg>
<svg style="left:61px;top:109.8px" width="8" height="6" viewBox="0 0 8 6"><path d="M1 1.2L4 4.2L7 1.2" fill="none" stroke="#555" stroke-width="1.1"/></svg>
<svg style="left:124px;top:109.8px" width="8" height="6" viewBox="0 0 8 6"><path d="M1 1.2L4 4.2L7 1.2" fill="none" stroke="#555" stroke-width="1.1"/></svg>
<svg style="left:205px;top:109.8px" width="8" height="6" viewBox="0 0 8 6"><path d="M1 1.2L4 4.2L7 1.2" fill="none" stroke="#555" stroke-width="1.1"/></svg>
<svg style="left:845px;top:0px" width="22" height="30" viewBox="845 0 22 30"><path d="M852.600 19.400L852.600 18.600L849.250 14.500A6.600 6.600 0 1 1 861.550 14.500L858.200 18.600L858.200 19.400" fill="none" stroke="#fff" stroke-width="1.400" stroke-linejoin="round"/><rect x="852.600" y="19.100" width="5.600" height="3.300" fill="none" stroke="#fff" stroke-width="1.400"/><path d="M853.300 24.400h4.300" stroke="#fff" stroke-width="1.200" fill="none"/></svg>
<svg style="left:3px;top:156px" width="24" height="24" viewBox="0 0 24 24"><circle cx="12" cy="12" r="11" fill="#3f78b5"/><circle cx="12" cy="6.800" r="1.700" fill="#fff"/><rect x="10.500" y="9.800" width="3" height="9" fill="#fff"/></svg>
<div id="fbar"></div><div id="namebox"></div><div id="fxbox"></div><div id="finput"></div>
<svg style="left:106px;top:209px" width="10" height="6" viewBox="0 0 10 6"><path d="M1 0.500h8L5 4.800z" fill="#777"/></svg>
<div style="left:139.5px;top:205.5px;width:3px;height:3px;background:#b0b0b0"></div>
<div style="left:139.5px;top:210px;width:3px;height:3px;background:#b0b0b0"></div>
<div style="left:139.5px;top:214.5px;width:3px;height:3px;background:#b0b0b0"></div>
<svg style="left:174px;top:204px" width="17" height="16" viewBox="0 0 17 16"><path d="M1.500 1.500L15 14.500M15 1.500L1.500 14.500" stroke="#bcbcbc" stroke-width="1.700" fill="none"/></svg>
<svg style="left:219px;top:204px" width="19" height="16" viewBox="0 0 19 16"><path d="M1.500 8.500L6.500 13.500L17.500 1.500" stroke="#c2c2c2" stroke-width="2.600" fill="none"/></svg>
<span class="t" style="left:264.5px;top:200px;font-family:'Liberation Serif',serif;font-style:italic;font-weight:400;font-size:21.5px;color:#555;-webkit-text-stroke:0.4px #555">f</span>
<span class="t" style="left:273px;top:205.400px;font-family:'Liberation Serif',serif;font-style:italic;font-weight:400;font-size:15px;color:#555;-webkit-text-stroke:0.4px #555">x</span>
<div id="grid-lines">
<div class="vl" style="left:95px"></div>
<div class="vl" style="left:167px"></div>
<div class="vl" style="left:239px"></div>
<div class="vl" style="left:311px"></div>
<div class="vl" style="left:383px"></div>
<div class="vl" style="left:455px"></div>
<div class="vl" style="left:527px"></div>
<div class="vl" style="left:599px"></div>
<div class="vl" style="left:671px"></div>
<div class="vl" style="left:743px"></div>
<div class="vl" style="left:815px"></div>
<div class="vl" style="left:887px"></div>
<div class="hl" style="top:331px"></div>
<div class="hl" style="top:353px"></div>
<div class="hl" style="top:375px"></div>
<div class="hl" style="top:397px"></div>
<div class="hl" style="top:419px"></div>
<div class="hl" style="top:441px"></div>
<div class="hl" style="top:463px"></div>
<div class="hl" style="top:485px"></div>
<div class="hl" style="top:507px"></div>
<div class="hl" style="top:529px"></div>
<div class="hl" style="top:551px"></div>
<div class="hl" style="top:573px"></div>
<div class="hl" style="top:595px"></div>
<div class="hl" style="top:617px"></div>
<div class="hl" style="top:639px"></div>
</div>
<div style="left:24px;top:332px;width:70px;height:108px;background:#efecf7"></div>
<div style="left:97px;top:312px;width:213px;height:19px;background:#fbe9e9"></div>
<div style="left:98px;top:333px;width:212px;height:107px;background:#e8eef9"></div>
<div style="left:24px;top:353px;width:70px;height:1px;background:#d0cdd8"></div>
<div style="left:98px;top:353px;width:212px;height:1px;background:#c9ced8"></div>
<div style="left:24px;top:375px;width:70px;height:1px;background:#d0cdd8"></div>
<div style="left:98px;top:375px;width:212px;height:1px;background:#c9ced8"></div>
<div style="left:24px;top:397px;width:70px;height:1px;background:#d0cdd8"></div>
<div style="left:98px;top:397px;width:212px;height:1px;background:#c9ced8"></div>
<div style="left:24px;top:419px;width:70px;height:1px;background:#d0cdd8"></div>
<div style="left:98px;top:419px;width:212px;height:1px;background:#c9ced8"></div>
<div style="left:167px;top:312px;width:1px;height:19px;background:#dccaca"></div>
<div style="left:167px;top:333px;width:1px;height:107px;background:#c9ced8"></div>
<div style="left:239px;top:312px;width:1px;height:19px;background:#dccaca"></div>
<div style="left:239px;top:333px;width:1px;height:107px;background:#c9ced8"></div>
<div style="left:24px;top:329px;width:2px;height:4px;background:#7e57c2"></div>
<div style="left:27px;top:330px;width:65px;height:2px;background:#7e57c2"></div>
<div style="left:24px;top:440px;width:2px;height:4px;background:#7e57c2"></div>
<div style="left:27px;top:441px;width:65px;height:2px;background:#7e57c2"></div>
<div style="left:95px;top:335px;width:2px;height:103px;background:#7e57c2"></div>
<div style="left:94px;top:313px;width:2px;height:15px;background:#c0283f"></div>
<div style="left:93px;top:310px;width:5px;height:2px;background:#c0283f"></div>
<div style="left:99px;top:331px;width:209px;height:2px;background:#c0283f"></div>
<div style="left:311px;top:313px;width:2px;height:15px;background:#c0283f"></div>
<div style="left:309px;top:310px;width:5px;height:2px;background:#c0283f"></div>
<div style="left:311px;top:335px;width:2px;height:103px;background:#2f66cc"></div>
<div style="left:99px;top:441px;width:209px;height:2px;background:#2f66cc"></div>
<div style="left:93px;top:329px;width:5px;height:5px;background:#7e57c2;box-shadow:0 0 0 1px #fff"></div>
<div style="left:93px;top:439px;width:5px;height:5px;background:#7e57c2;box-shadow:0 0 0 1px #fff"></div>
<div style="left:309px;top:329px;width:5px;height:5px;background:#c0283f;box-shadow:0 0 0 1px #fff"></div>
<div style="left:309px;top:439px;width:5px;height:5px;background:#2f66cc;box-shadow:0 0 0 1px #fff"></div>
<div id="colhdr"></div><div id="rowhdr"></div>
<div class="cs" style="left:95px"></div>
<div class="cs" style="left:167px"></div>
<div class="cs" style="left:239px"></div>
<div class="cs" style="left:311px"></div>
<div class="cs" style="left:383px"></div>
<div class="cs" style="left:455px"></div>
<div class="cs" style="left:527px"></div>
<div class="cs" style="left:599px"></div>
<div class="cs" style="left:671px"></div>
<div class="cs" style="left:743px"></div>
<div class="cs" style="left:815px"></div>
<div class="cs" style="left:887px"></div>
<div class="rl" style="top:331px"></div>
<div class="rl" style="top:353px"></div>
<div class="rl" style="top:375px"></div>
<div class="rl" style="top:397px"></div>
<div class="rl" style="top:419px"></div>
<div class="rl" style="top:441px"></div>
<div class="rl" style="top:463px"></div>
<div class="rl" style="top:485px"></div>
<div class="rl" style="top:507px"></div>
<div class="rl" style="top:529px"></div>
<div class="rl" style="top:551px"></div>
<div class="rl" style="top:573px"></div>
<div class="rl" style="top:595px"></div>
<div class="rl" style="top:617px"></div>
<div class="rl" style="top:639px"></div>
<div class="cs" style="left:23px;background:#9f9f9f"></div>
<svg style="left:5px;top:291px" width="16" height="16" viewBox="0 0 16 16"><path d="M15 0.5V15H0.5Z" fill="#b4b4b4"/></svg>
<div id="chart"></div>
<svg id="chartsvg" style="left:0;top:0" width="883" height="657" viewBox="0 0 883 657"><rect x="317.700" y="322.400" width="539.950" height="323" fill="#fff" stroke="#8e8e8e" stroke-width="1.250"/><rect x="367.500" y="576.00" width="474" height="1.050" fill="#d5d5d5"/><rect x="367.500" y="542.80" width="474" height="1.050" fill="#d5d5d5"/><rect x="367.500" y="509.20" width="474" height="1.050" fill="#d5d5d5"/><rect x="367.500" y="475.90" width="474" height="1.050" fill="#d5d5d5"/><rect x="367.500" y="442.60" width="474" height="1.050" fill="#d5d5d5"/><rect x="367.500" y="409.50" width="474" height="1.050" fill="#d5d5d5"/><rect x="367.500" y="376.70" width="474" height="1.050" fill="#d5d5d5"/><rect x="386" y="543.05" width="16" height="33.15" fill="#4472c4"/><rect x="407" y="529.79" width="16" height="46.41" fill="#ed7d31"/><rect x="428" y="539.74" width="16" height="36.47" fill="#a5a5a5"/><rect x="480" y="509.90" width="17" height="66.30" fill="#4472c4"/><rect x="502" y="556.31" width="16" height="19.89" fill="#ed7d31"/><rect x="523" y="529.79" width="16" height="46.41" fill="#a5a5a5"/><rect x="575" y="476.75" width="17" height="99.45" fill="#4472c4"/><rect x="596" y="543.05" width="17" height="33.15" fill="#ed7d31"/><rect x="617" y="519.85" width="17" height="56.35" fill="#a5a5a5"/><rect x="670" y="443.60" width="17" height="132.60" fill="#4472c4"/><rect x="691" y="516.53" width="17" height="59.67" fill="#ed7d31"/><rect x="712" y="516.53" width="17" height="59.67" fill="#a5a5a5"/><rect x="765" y="410.45" width="16" height="165.75" fill="#4472c4"/><rect x="786" y="536.42" width="16" height="39.78" fill="#ed7d31"/><rect x="807" y="509.90" width="16" height="66.30" fill="#a5a5a5"/><rect x="504.2" y="620.300" width="7.600" height="7.800" fill="#4472c4"/><rect x="578" y="620.300" width="7.600" height="7.800" fill="#ed7d31"/><rect x="627.5" y="620.300" width="7.600" height="7.800" fill="#a5a5a5"/><circle cx="318.1" cy="322.9" r="5.950" fill="#fff" stroke="#8c8c8c" stroke-width="2.100"/><circle cx="588" cy="322.9" r="5.950" fill="#fff" stroke="#8c8c8c" stroke-width="2.100"/><circle cx="858.05" cy="322.9" r="5.950" fill="#fff" stroke="#8c8c8c" stroke-width="2.100"/><circle cx="318.1" cy="484.4" r="5.950" fill="#fff" stroke="#8c8c8c" stroke-width="2.100"/><circle cx="858.05" cy="484.4" r="5.950" fill="#fff" stroke="#8c8c8c" stroke-width="2.100"/><circle cx="318.1" cy="646" r="5.950" fill="#fff" stroke="#8c8c8c" stroke-width="2.100"/><circle cx="588" cy="646" r="5.950" fill="#fff" stroke="#8c8c8c" stroke-width="2.100"/><circle cx="858.05" cy="646" r="5.950" fill="#fff" stroke="#8c8c8c" stroke-width="2.100"/></svg>
<span class="t" style="left:14.67px;top:7.56px;font-size:14.7px;color:#ffffff;letter-spacing:0.035px;">File</span>
<span class="t" style="left:77.27px;top:7.56px;font-size:14.7px;color:#ffffff;letter-spacing:0.996px;">Home</span>
<span class="t" style="left:145.26px;top:7.56px;font-size:14.7px;color:#ffffff;letter-spacing:0.088px;">Insert</span>
<span class="t" style="left:208.26px;top:7.56px;font-size:14.7px;color:#ffffff;letter-spacing:-0.181px;">Page Layout</span>
<span class="t" style="left:315.66px;top:7.56px;font-size:14.7px;color:#ffffff;letter-spacing:-0.106px;">Formulas</span>
<span class="t" style="left:402.87px;top:7.56px;font-size:14.7px;color:#ffffff;letter-spacing:0.248px;">Data</span>
<span class="t" style="left:461.66px;top:7.56px;font-size:14.7px;color:#ffffff;letter-spacing:-0.179px;">Review</span>
<span class="t" style="left:535.66px;top:7.56px;font-size:14.7px;color:#ffffff;letter-spacing:0.333px;">View</span>
<span class="t" style="left:594.76px;top:7.56px;font-size:14.7px;color:#ffffff;letter-spacing:0.586px;">Help</span>
<span class="t" style="left:767.87px;top:7.56px;font-size:14.7px;color:#ffffff;letter-spacing:0.112px;">Format</span>
<span class="t" style="left:656.26px;top:7.56px;font-size:14.7px;color:#217346;letter-spacing:-0.068px;">Chart Design</span>
<span class="t" style="left:878.26px;top:7.56px;font-size:14.7px;color:#ffffff;letter-spacing:0.107px;">Tell me</span>
<span class="t" style="left:2.77px;top:86.56px;font-size:14.7px;color:#383838;letter-spacing:0.192px;">Add Chart</span>
<span class="t" style="left:1.77px;top:106.56px;font-size:14.7px;color:#383838;letter-spacing:0.131px;">Element</span>
<span class="t" style="left:85.77px;top:86.56px;font-size:14.7px;color:#383838;letter-spacing:0.032px;">Quick</span>
<span class="t" style="left:74.77px;top:106.56px;font-size:14.7px;color:#383838;letter-spacing:0.113px;">Layout</span>
<span class="t" style="left:160.76px;top:86.56px;font-size:14.7px;color:#383838;letter-spacing:-0.255px;">Change</span>
<span class="t" style="left:157.26px;top:106.56px;font-size:14.7px;color:#383838;letter-spacing:0.145px;">Colors</span>
<span class="t" style="left:27.00px;top:132.56px;font-size:12.1px;color:#383838;letter-spacing:0.273px;">Chart Layouts</span>
<span class="t" style="left:604.39px;top:132.56px;font-size:12.1px;color:#383838;letter-spacing:0.281px;">Chart Styles</span>
<span class="t" style="left:39.77px;top:160.54px;font-size:14.6px;color:#3b3b3b;letter-spacing:-0.391px;-webkit-text-stroke:0.18px #3b3b3b;">UPDATES AVAILABLE</span>
<span class="t" style="left:193.47px;top:160.54px;font-size:14.6px;color:#424242;letter-spacing:0.173px;text-decoration:underline;text-underline-offset:1px;text-decoration-thickness:1px;text-decoration-skip-ink:none;">Updates for Office are ready to be installed, but first we need to close some apps.</span>
<span class="t" style="left:777.57px;top:160.54px;font-size:14.6px;color:#444444;letter-spacing:0.464px;">Update now</span>
<span class="t" style="left:3.22px;top:204.79px;font-size:15.6px;color:#444444;letter-spacing:0.351px;">Chart 6</span>
<span class="t" style="left:55.13px;top:290.44px;font-size:14.6px;color:#1a1a1a;">A</span>
<span class="t" style="left:127.13px;top:290.44px;font-size:14.6px;color:#1a1a1a;">B</span>
<span class="t" style="left:198.73px;top:290.44px;font-size:14.6px;color:#1a1a1a;">C</span>
<span class="t" style="left:270.73px;top:290.44px;font-size:14.6px;color:#1a1a1a;">D</span>
<span class="t" style="left:343.13px;top:290.44px;font-size:14.6px;color:#1a1a1a;">E</span>
<span class="t" style="left:415.54px;top:290.44px;font-size:14.6px;color:#1a1a1a;">F</span>
<span class="t" style="left:486.32px;top:290.44px;font-size:14.6px;color:#1a1a1a;">G</span>
<span class="t" style="left:558.73px;top:290.44px;font-size:14.6px;color:#1a1a1a;">H</span>
<span class="t" style="left:633.97px;top:290.44px;font-size:14.6px;color:#1a1a1a;">I</span>
<span class="t" style="left:704.35px;top:290.44px;font-size:14.6px;color:#1a1a1a;">J</span>
<span class="t" style="left:775.13px;top:290.44px;font-size:14.6px;color:#1a1a1a;">K</span>
<span class="t" style="left:847.94px;top:290.44px;font-size:14.6px;color:#1a1a1a;">L</span>
<span class="t" style="left:3.39px;top:314.91px;font-size:14.4px;color:#262626;">1</span>
<span class="t" style="left:3.39px;top:336.91px;font-size:14.4px;color:#262626;">2</span>
<span class="t" style="left:3.39px;top:358.91px;font-size:14.4px;color:#262626;">3</span>
<span class="t" style="left:3.39px;top:380.91px;font-size:14.4px;color:#262626;">4</span>
<span class="t" style="left:3.39px;top:402.91px;font-size:14.4px;color:#262626;">5</span>
<span class="t" style="left:3.39px;top:424.91px;font-size:14.4px;color:#262626;">6</span>
<span class="t" style="left:3.39px;top:446.91px;font-size:14.4px;color:#262626;">7</span>
<span class="t" style="left:3.39px;top:468.91px;font-size:14.4px;color:#262626;">8</span>
<span class="t" style="left:3.39px;top:490.91px;font-size:14.4px;color:#262626;">9</span>
<span class="t" style="left:-0.11px;top:512.91px;font-size:14.4px;color:#262626;letter-spacing:-0.5px;">10</span>
<span class="t" style="left:0.42px;top:534.91px;font-size:14.4px;color:#262626;letter-spacing:-0.5px;">11</span>
<span class="t" style="left:-0.11px;top:556.91px;font-size:14.4px;color:#262626;letter-spacing:-0.5px;">12</span>
<span class="t" style="left:-0.11px;top:578.91px;font-size:14.4px;color:#262626;letter-spacing:-0.5px;">13</span>
<span class="t" style="left:-0.11px;top:600.91px;font-size:14.4px;color:#262626;letter-spacing:-0.5px;">14</span>
<span class="t" style="left:-0.11px;top:622.91px;font-size:14.4px;color:#262626;letter-spacing:-0.5px;">15</span>
<span class="t" style="left:-0.11px;top:644.91px;font-size:14.4px;color:#262626;letter-spacing:-0.5px;">16</span>
<span class="t" style="left:26.63px;top:313.95px;font-size:15.3px;color:#000000;font-weight:700;letter-spacing:0.247px;">Months</span>
<span class="t" style="left:98.83px;top:313.95px;font-size:15.3px;color:#000000;font-weight:700;letter-spacing:-0.716px;">Expenses</span>
<span class="t" style="left:170.74px;top:313.95px;font-size:15.3px;color:#000000;font-weight:700;letter-spacing:-0.751px;">Days</span>
<span class="t" style="left:242.44px;top:313.95px;font-size:15.3px;color:#000000;font-weight:700;letter-spacing:-0.874px;">savings</span>
<span class="t" style="left:26.34px;top:335.95px;font-size:15.3px;color:#000000;letter-spacing:-1.074px;">Jan</span>
<span class="t" style="left:137.78px;top:335.95px;font-size:15.3px;color:#000000;letter-spacing:0.476px;">500</span>
<span class="t" style="left:209.78px;top:335.95px;font-size:15.3px;color:#000000;letter-spacing:0.476px;">700</span>
<span class="t" style="left:281.38px;top:335.95px;font-size:15.3px;color:#000000;letter-spacing:0.476px;">550</span>
<span class="t" style="left:26.34px;top:357.95px;font-size:15.3px;color:#000000;letter-spacing:-0.918px;">Feb</span>
<span class="t" style="left:129.16px;top:357.95px;font-size:15.3px;color:#000000;letter-spacing:0.358px;">1000</span>
<span class="t" style="left:209.78px;top:357.95px;font-size:15.3px;color:#000000;letter-spacing:0.476px;">300</span>
<span class="t" style="left:281.38px;top:357.95px;font-size:15.3px;color:#000000;letter-spacing:0.476px;">700</span>
<span class="t" style="left:26.34px;top:379.95px;font-size:15.3px;color:#000000;letter-spacing:0.656px;">March</span>
<span class="t" style="left:129.16px;top:379.95px;font-size:15.3px;color:#000000;letter-spacing:0.358px;">1500</span>
<span class="t" style="left:209.78px;top:379.95px;font-size:15.3px;color:#000000;letter-spacing:0.476px;">500</span>
<span class="t" style="left:281.38px;top:379.95px;font-size:15.3px;color:#000000;letter-spacing:0.476px;">850</span>
<span class="t" style="left:26.34px;top:401.95px;font-size:15.3px;color:#000000;letter-spacing:0.756px;">Apr</span>
<span class="t" style="left:129.16px;top:401.95px;font-size:15.3px;color:#000000;letter-spacing:0.358px;">2000</span>
<span class="t" style="left:209.78px;top:401.95px;font-size:15.3px;color:#000000;letter-spacing:0.476px;">900</span>
<span class="t" style="left:281.38px;top:401.95px;font-size:15.3px;color:#000000;letter-spacing:0.476px;">900</span>
<span class="t" style="left:26.34px;top:423.95px;font-size:15.3px;color:#000000;letter-spacing:1.009px;">May</span>
<span class="t" style="left:129.16px;top:423.95px;font-size:15.3px;color:#000000;letter-spacing:0.358px;">2500</span>
<span class="t" style="left:209.78px;top:423.95px;font-size:15.3px;color:#000000;letter-spacing:0.476px;">600</span>
<span class="t" style="left:272.75px;top:423.95px;font-size:15.3px;color:#000000;letter-spacing:0.358px;">1000</span>
<span class="t" style="left:543.19px;top:337.51px;font-size:18.3px;color:#595959;letter-spacing:0.555px;">Chart Title</span>
<span class="t" style="left:327.59px;top:371.11px;font-size:12.1px;color:#595959;letter-spacing:0.387px;">3000</span>
<span class="t" style="left:327.59px;top:404.11px;font-size:12.1px;color:#595959;letter-spacing:0.387px;">2500</span>
<span class="t" style="left:327.59px;top:437.91px;font-size:12.1px;color:#595959;letter-spacing:0.387px;">2000</span>
<span class="t" style="left:327.59px;top:470.91px;font-size:12.1px;color:#595959;letter-spacing:0.387px;">1500</span>
<span class="t" style="left:327.59px;top:504.21px;font-size:12.1px;color:#595959;letter-spacing:0.387px;">1000</span>
<span class="t" style="left:334.55px;top:537.31px;font-size:12.1px;color:#595959;letter-spacing:0.465px;">500</span>
<span class="t" style="left:348.44px;top:569.91px;font-size:12.1px;color:#595959;">0</span>
<span class="t" style="left:405.10px;top:587.86px;font-size:12.1px;color:#595959;letter-spacing:-0.116px;">Jan</span>
<span class="t" style="left:499.39px;top:587.86px;font-size:12.1px;color:#595959;letter-spacing:-0.388px;">Feb</span>
<span class="t" style="left:586.35px;top:587.86px;font-size:12.1px;color:#595959;letter-spacing:0.490px;">March</span>
<span class="t" style="left:688.60px;top:587.86px;font-size:12.1px;color:#595959;letter-spacing:0.820px;">Apr</span>
<span class="t" style="left:781.30px;top:587.86px;font-size:12.1px;color:#595959;letter-spacing:0.804px;">May</span>
<span class="t" style="left:514.79px;top:618.16px;font-size:12.1px;color:#595959;letter-spacing:-0.322px;">Expenses</span>
<span class="t" style="left:588.39px;top:618.16px;font-size:12.1px;color:#595959;letter-spacing:-0.331px;">Days</span>
<span class="t" style="left:637.19px;top:618.16px;font-size:12.1px;color:#595959;letter-spacing:-0.241px;">savings</span>
</div>
</body></html>
